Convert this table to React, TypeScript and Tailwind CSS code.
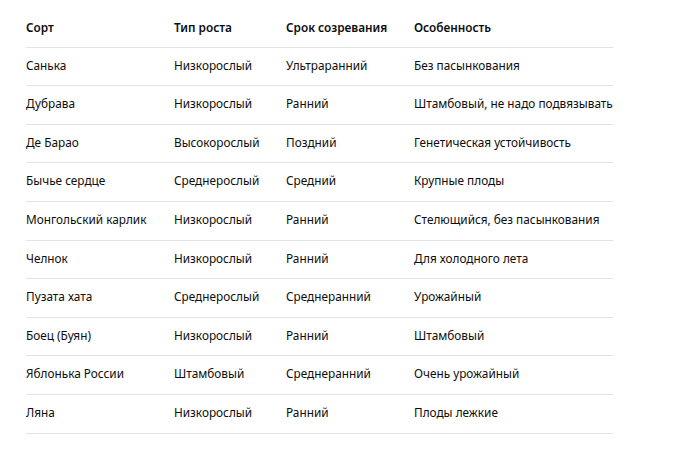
const rows: [string, string, string, string][] = [
  ["Санька", "Низкорослый", "Ультраранний", "Без пасынкования"],
  ["Дубрава", "Низкорослый", "Ранний", "Штамбовый, не надо подвязывать"],
  ["Де Барао", "Высокорослый", "Поздний", "Генетическая устойчивость"],
  ["Бычье сердце", "Среднерослый", "Средний", "Крупные плоды"],
  ["Монгольский карлик", "Низкорослый", "Ранний", "Стелющийся, без пасынкования"],
  ["Челнок", "Низкорослый", "Ранний", "Для холодного лета"],
  ["Пузата хата", "Среднерослый", "Среднеранний", "Урожайный"],
  ["Боец (Буян)", "Низкорослый", "Ранний", "Штамбовый"],
  ["Яблонька России", "Штамбовый", "Среднеранний", "Очень урожайный"],
  ["Ляна", "Низкорослый", "Ранний", "Плоды лежкие"],
];

const cell = "leading-[17.6px] text-left align-middle whitespace-nowrap";

export default function App() {
  return (
    <div
      className="min-h-[453px] bg-white pl-[26px] pt-[9px] text-[11.8px] text-[#0d0d0d]"
      style={{ fontFamily: '"Noto Sans", "Open Sans", sans-serif' }}
    >
      <table className="border-collapse">
        <thead>
          <tr className="border-b border-[#e3e3e3]">
            <th className={`${cell} w-[148px] pt-[10px] pb-[10px] font-semibold`}>Сорт</th>
            <th className={`${cell} w-[112px] pt-[10px] pb-[10px] font-semibold`}>Тип роста</th>
            <th className={`${cell} w-[128px] pt-[10px] pb-[10px] font-semibold`}>Срок созревания</th>
            <th className={`${cell} pt-[10px] pb-[10px] font-semibold`}>Особенность</th>
          </tr>
        </thead>
        <tbody>
          {rows.map((r) => (
            <tr key={r[0]} className="border-b border-[#e3e3e3]">
              {r.map((c, i) => (
                <td key={i} className={`${cell} pt-[9px] pb-[11px] font-normal`}>
                  {c}
                </td>
              ))}
            </tr>
          ))}
        </tbody>
      </table>
    </div>
  );
}
